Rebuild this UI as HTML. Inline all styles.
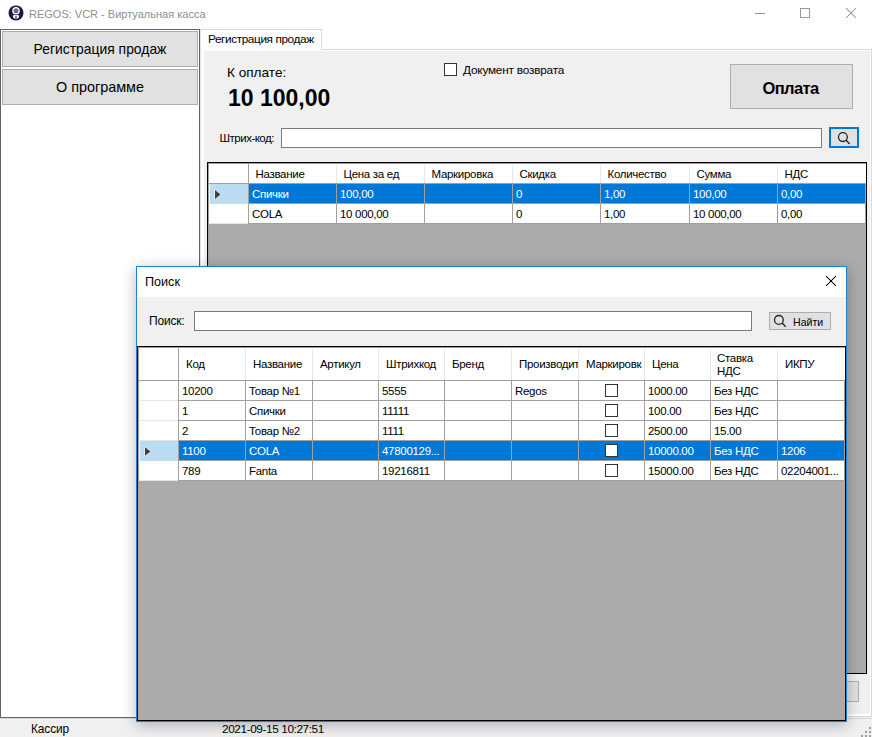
<!DOCTYPE html><html><head><meta charset="utf-8"><style>
html,body{margin:0;padding:0;}
body{width:872px;height:737px;overflow:hidden;position:relative;background:#fff;font-family:"Liberation Sans",sans-serif;}
.a{position:absolute;box-sizing:border-box;}
.t{position:absolute;white-space:nowrap;font-family:"Liberation Sans",sans-serif;}
svg{position:absolute;overflow:visible;}
</style></head><body>
<svg style="left:0;top:0" width="30" height="28" viewBox="0 0 30 28">
<circle cx="16" cy="12.9" r="7.5" fill="#1c1840"/>
<circle cx="16" cy="10.7" r="3.15" fill="#6c6890" stroke="#fff" stroke-width="1.3"/>
<path d="M13 16.2 Q13 15.1 14.2 15.1 L17.8 15.1 Q19 15.1 19 16.2 Q19 18.7 16 18.7 Q13 18.7 13 16.2 Z" fill="#fff"/>
<rect x="15.35" y="15.6" width="1.3" height="2.6" fill="#3a3660"/>
</svg>
<div class="t" style="left:29px;top:6.99px;font-size:11px;line-height:15px;color:#8e8e8e;font-weight:normal;">REGOS: VCR - Виртуальная касса</div>
<div class="a" style="left:755px;top:13px;width:10px;height:1px;background:#999;"></div>
<div class="a" style="left:800px;top:8px;width:10px;height:10px;box-shadow:inset 0 0 0 1px #999;"></div>
<div class="a" style="left:847px;top:8px;width:1px;height:1px;background:rgba(0,0,0,0.07);"></div>
<div class="a" style="left:846px;top:9px;width:1px;height:1px;background:rgba(0,0,0,0.07);"></div>
<div class="a" style="left:854px;top:8px;width:1px;height:1px;background:rgba(0,0,0,0.07);"></div>
<div class="a" style="left:855px;top:9px;width:1px;height:1px;background:rgba(0,0,0,0.07);"></div>
<div class="a" style="left:848px;top:9px;width:1px;height:1px;background:rgba(0,0,0,0.07);"></div>
<div class="a" style="left:847px;top:10px;width:1px;height:1px;background:rgba(0,0,0,0.07);"></div>
<div class="a" style="left:853px;top:9px;width:1px;height:1px;background:rgba(0,0,0,0.07);"></div>
<div class="a" style="left:854px;top:10px;width:1px;height:1px;background:rgba(0,0,0,0.07);"></div>
<div class="a" style="left:849px;top:10px;width:1px;height:1px;background:rgba(0,0,0,0.07);"></div>
<div class="a" style="left:848px;top:11px;width:1px;height:1px;background:rgba(0,0,0,0.07);"></div>
<div class="a" style="left:852px;top:10px;width:1px;height:1px;background:rgba(0,0,0,0.07);"></div>
<div class="a" style="left:853px;top:11px;width:1px;height:1px;background:rgba(0,0,0,0.07);"></div>
<div class="a" style="left:850px;top:11px;width:1px;height:1px;background:rgba(0,0,0,0.07);"></div>
<div class="a" style="left:849px;top:12px;width:1px;height:1px;background:rgba(0,0,0,0.07);"></div>
<div class="a" style="left:851px;top:11px;width:1px;height:1px;background:rgba(0,0,0,0.07);"></div>
<div class="a" style="left:852px;top:12px;width:1px;height:1px;background:rgba(0,0,0,0.07);"></div>
<div class="a" style="left:851px;top:12px;width:1px;height:1px;background:rgba(0,0,0,0.07);"></div>
<div class="a" style="left:850px;top:13px;width:1px;height:1px;background:rgba(0,0,0,0.07);"></div>
<div class="a" style="left:850px;top:12px;width:1px;height:1px;background:rgba(0,0,0,0.07);"></div>
<div class="a" style="left:851px;top:13px;width:1px;height:1px;background:rgba(0,0,0,0.07);"></div>
<div class="a" style="left:852px;top:13px;width:1px;height:1px;background:rgba(0,0,0,0.07);"></div>
<div class="a" style="left:851px;top:14px;width:1px;height:1px;background:rgba(0,0,0,0.07);"></div>
<div class="a" style="left:849px;top:13px;width:1px;height:1px;background:rgba(0,0,0,0.07);"></div>
<div class="a" style="left:850px;top:14px;width:1px;height:1px;background:rgba(0,0,0,0.07);"></div>
<div class="a" style="left:853px;top:14px;width:1px;height:1px;background:rgba(0,0,0,0.07);"></div>
<div class="a" style="left:852px;top:15px;width:1px;height:1px;background:rgba(0,0,0,0.07);"></div>
<div class="a" style="left:848px;top:14px;width:1px;height:1px;background:rgba(0,0,0,0.07);"></div>
<div class="a" style="left:849px;top:15px;width:1px;height:1px;background:rgba(0,0,0,0.07);"></div>
<div class="a" style="left:854px;top:15px;width:1px;height:1px;background:rgba(0,0,0,0.07);"></div>
<div class="a" style="left:853px;top:16px;width:1px;height:1px;background:rgba(0,0,0,0.07);"></div>
<div class="a" style="left:847px;top:15px;width:1px;height:1px;background:rgba(0,0,0,0.07);"></div>
<div class="a" style="left:848px;top:16px;width:1px;height:1px;background:rgba(0,0,0,0.07);"></div>
<div class="a" style="left:855px;top:16px;width:1px;height:1px;background:rgba(0,0,0,0.07);"></div>
<div class="a" style="left:854px;top:17px;width:1px;height:1px;background:rgba(0,0,0,0.07);"></div>
<div class="a" style="left:846px;top:16px;width:1px;height:1px;background:rgba(0,0,0,0.07);"></div>
<div class="a" style="left:847px;top:17px;width:1px;height:1px;background:rgba(0,0,0,0.07);"></div>
<div class="a" style="left:846px;top:8px;width:1px;height:1px;background:#999;"></div>
<div class="a" style="left:855px;top:8px;width:1px;height:1px;background:#999;"></div>
<div class="a" style="left:847px;top:9px;width:1px;height:1px;background:#999;"></div>
<div class="a" style="left:854px;top:9px;width:1px;height:1px;background:#999;"></div>
<div class="a" style="left:848px;top:10px;width:1px;height:1px;background:#999;"></div>
<div class="a" style="left:853px;top:10px;width:1px;height:1px;background:#999;"></div>
<div class="a" style="left:849px;top:11px;width:1px;height:1px;background:#999;"></div>
<div class="a" style="left:852px;top:11px;width:1px;height:1px;background:#999;"></div>
<div class="a" style="left:850px;top:12px;width:1px;height:1px;background:#999;"></div>
<div class="a" style="left:851px;top:12px;width:1px;height:1px;background:#999;"></div>
<div class="a" style="left:851px;top:13px;width:1px;height:1px;background:#999;"></div>
<div class="a" style="left:850px;top:13px;width:1px;height:1px;background:#999;"></div>
<div class="a" style="left:852px;top:14px;width:1px;height:1px;background:#999;"></div>
<div class="a" style="left:849px;top:14px;width:1px;height:1px;background:#999;"></div>
<div class="a" style="left:853px;top:15px;width:1px;height:1px;background:#999;"></div>
<div class="a" style="left:848px;top:15px;width:1px;height:1px;background:#999;"></div>
<div class="a" style="left:854px;top:16px;width:1px;height:1px;background:#999;"></div>
<div class="a" style="left:847px;top:16px;width:1px;height:1px;background:#999;"></div>
<div class="a" style="left:855px;top:17px;width:1px;height:1px;background:#999;"></div>
<div class="a" style="left:846px;top:17px;width:1px;height:1px;background:#999;"></div>
<div class="a" style="left:0px;top:29px;width:200px;height:689px;background:#fff;box-shadow:inset 0 0 0 1px #646464;"></div>
<div class="a" style="left:2px;top:31px;width:196px;height:36px;background:#e1e1e1;box-shadow:inset 0 0 0 1px #adadad;"></div>
<div class="a" style="left:2px;top:69px;width:196px;height:36px;background:#e1e1e1;box-shadow:inset 0 0 0 1px #adadad;"></div>
<div class="t" style="left:2px;width:196px;text-align:center;top:40px;font-size:13.9px;line-height:18px;">Регистрация продаж</div>
<div class="t" style="left:2px;width:196px;text-align:center;top:78px;font-size:14.4px;line-height:18px;">О программе</div>
<div class="a" style="left:200px;top:49px;width:672px;height:668px;background:#fff;"></div>
<div class="a" style="left:321px;top:49px;width:551px;height:1px;background:#d9d9d9;"></div>
<div class="a" style="left:871px;top:49px;width:1px;height:668px;background:#d9d9d9;"></div>
<div class="a" style="left:200px;top:716px;width:672px;height:1px;background:#d9d9d9;"></div>
<div class="a" style="left:204px;top:51px;width:666px;height:663px;background:#f0f0f0;"></div>
<div class="a" style="left:200px;top:29px;width:1px;height:688px;background:#e3e3e3;"></div>
<div class="a" style="left:201px;top:29px;width:121px;height:22px;background:#fff;"></div>
<div class="a" style="left:201px;top:29px;width:121px;height:1px;background:#d9d9d9;"></div>
<div class="a" style="left:321px;top:29px;width:1px;height:21px;background:#d9d9d9;"></div>
<div class="t" style="left:208px;top:30.61px;font-size:11.8px;line-height:17px;color:#000;font-weight:normal;letter-spacing:-0.4px;">Регистрация продаж</div>
<div class="t" style="left:227px;top:63.19px;font-size:13.6px;line-height:19px;color:#000;font-weight:normal;">К оплате:</div>
<div class="t" style="left:228px;top:81.53px;font-size:23px;line-height:32px;color:#000;font-weight:bold;">10 100,00</div>
<div class="a" style="left:444px;top:63px;width:13px;height:13px;background:#fff;box-shadow:inset 0 0 0 1px #333;"></div>
<div class="t" style="left:463px;top:61.91px;font-size:11.8px;line-height:17px;color:#000;font-weight:normal;letter-spacing:-0.2px;">Документ возврата</div>
<div class="a" style="left:730px;top:64px;width:123px;height:45px;background:#e1e1e1;box-shadow:inset 0 0 0 1px #adadad;"></div>
<div class="t" style="left:729px;width:123px;text-align:center;top:78px;font-size:16.5px;line-height:20px;font-weight:bold;letter-spacing:-0.6px;">Оплата</div>
<div class="t" style="left:219.5px;top:130.02px;font-size:11.5px;line-height:16px;color:#000;font-weight:normal;letter-spacing:-0.5px;">Штрих-код:</div>
<div class="a" style="left:281px;top:128px;width:541px;height:20px;background:#fff;box-shadow:inset 0 0 0 1px #7a7a7a;"></div>
<div class="a" style="left:829px;top:127px;width:30px;height:21px;background:#e1e1e1;box-shadow:inset 0 0 0 2px #0078d7;"></div>
<svg style="left:0;top:0" width="872" height="160"><circle cx="842.9" cy="137.1" r="4.4" fill="none" stroke="#222" stroke-width="1.3"/><path d="M846.1 140.3 L849.7 143.9" stroke="#222" stroke-width="1.4"/></svg>
<div class="a" style="left:207px;top:162px;width:660px;height:512px;background:#ababab;box-shadow:inset 0 0 0 1px #000;"></div>
<div class="a" style="left:208px;top:163px;width:658px;height:20px;background:#fff;"></div>
<div class="a" style="left:208px;top:183px;width:658px;height:1px;background:#a0a0a0;"></div>
<div class="a" style="left:336px;top:165px;width:1px;height:18px;background:#e5e5e5;"></div>
<div class="a" style="left:424px;top:165px;width:1px;height:18px;background:#e5e5e5;"></div>
<div class="a" style="left:512px;top:165px;width:1px;height:18px;background:#e5e5e5;"></div>
<div class="a" style="left:600px;top:165px;width:1px;height:18px;background:#e5e5e5;"></div>
<div class="a" style="left:689px;top:165px;width:1px;height:18px;background:#e5e5e5;"></div>
<div class="a" style="left:777px;top:165px;width:1px;height:18px;background:#e5e5e5;"></div>
<div class="a" style="left:248px;top:163px;width:1px;height:21px;background:#a0a0a0;"></div>
<div class="a" style="left:208px;top:184px;width:40px;height:20px;background:#fff;"></div>
<div class="a" style="left:210px;top:184px;width:38px;height:20px;background:#bcdcf4;"></div>
<div class="a" style="left:249px;top:184px;width:617px;height:19px;background:#0078d7;"></div>
<div class="a" style="left:249px;top:203px;width:617px;height:1px;background:#a0a0a0;"></div>
<div class="a" style="left:248px;top:184px;width:1px;height:20px;background:#a0a0a0;"></div>
<div class="a" style="left:336px;top:184px;width:1px;height:20px;background:#a0a0a0;"></div>
<div class="a" style="left:424px;top:184px;width:1px;height:20px;background:#a0a0a0;"></div>
<div class="a" style="left:512px;top:184px;width:1px;height:20px;background:#a0a0a0;"></div>
<div class="a" style="left:600px;top:184px;width:1px;height:20px;background:#a0a0a0;"></div>
<div class="a" style="left:689px;top:184px;width:1px;height:20px;background:#a0a0a0;"></div>
<div class="a" style="left:777px;top:184px;width:1px;height:20px;background:#a0a0a0;"></div>
<div class="t" style="left:252px;top:185.77px;font-size:11.5px;line-height:16px;color:#fff;font-weight:normal;letter-spacing:-0.3px;">Спички</div>
<div class="t" style="left:340px;top:185.77px;font-size:11.5px;line-height:16px;color:#fff;font-weight:normal;letter-spacing:-0.3px;">100,00</div>
<div class="t" style="left:516px;top:185.77px;font-size:11.5px;line-height:16px;color:#fff;font-weight:normal;letter-spacing:-0.3px;">0</div>
<div class="t" style="left:604px;top:185.77px;font-size:11.5px;line-height:16px;color:#fff;font-weight:normal;letter-spacing:-0.3px;">1,00</div>
<div class="t" style="left:693px;top:185.77px;font-size:11.5px;line-height:16px;color:#fff;font-weight:normal;letter-spacing:-0.3px;">100,00</div>
<div class="t" style="left:781px;top:185.77px;font-size:11.5px;line-height:16px;color:#fff;font-weight:normal;letter-spacing:-0.3px;">0,00</div>
<svg style="left:0;top:0" width="300" height="260"><path d="M214.4 189.2 L221.4 194.5 L214.4 199.8 Z" fill="#fff"/><path d="M215 190 L220.6 194.5 L215 199 Z" fill="#404040"/></svg>
<div class="a" style="left:208px;top:204px;width:40px;height:20px;background:#fff;"></div>
<div class="a" style="left:210px;top:223px;width:38px;height:1px;background:#e6e6e6;"></div>
<div class="a" style="left:249px;top:204px;width:617px;height:19px;background:#fff;"></div>
<div class="a" style="left:249px;top:223px;width:617px;height:1px;background:#a0a0a0;"></div>
<div class="a" style="left:248px;top:204px;width:1px;height:20px;background:#a0a0a0;"></div>
<div class="a" style="left:336px;top:204px;width:1px;height:20px;background:#a0a0a0;"></div>
<div class="a" style="left:424px;top:204px;width:1px;height:20px;background:#a0a0a0;"></div>
<div class="a" style="left:512px;top:204px;width:1px;height:20px;background:#a0a0a0;"></div>
<div class="a" style="left:600px;top:204px;width:1px;height:20px;background:#a0a0a0;"></div>
<div class="a" style="left:689px;top:204px;width:1px;height:20px;background:#a0a0a0;"></div>
<div class="a" style="left:777px;top:204px;width:1px;height:20px;background:#a0a0a0;"></div>
<div class="t" style="left:252px;top:205.77px;font-size:11.5px;line-height:16px;color:#000;font-weight:normal;letter-spacing:-0.3px;">COLA</div>
<div class="t" style="left:340px;top:205.77px;font-size:11.5px;line-height:16px;color:#000;font-weight:normal;letter-spacing:-0.3px;">10 000,00</div>
<div class="t" style="left:516px;top:205.77px;font-size:11.5px;line-height:16px;color:#000;font-weight:normal;letter-spacing:-0.3px;">0</div>
<div class="t" style="left:604px;top:205.77px;font-size:11.5px;line-height:16px;color:#000;font-weight:normal;letter-spacing:-0.3px;">1,00</div>
<div class="t" style="left:693px;top:205.77px;font-size:11.5px;line-height:16px;color:#000;font-weight:normal;letter-spacing:-0.3px;">10 000,00</div>
<div class="t" style="left:781px;top:205.77px;font-size:11.5px;line-height:16px;color:#000;font-weight:normal;letter-spacing:-0.3px;">0,00</div>
<div class="t" style="left:255.5px;top:166.32px;font-size:11.5px;line-height:16px;color:#000;font-weight:normal;letter-spacing:-0.3px;">Название</div>
<div class="t" style="left:343.5px;top:166.32px;font-size:11.5px;line-height:16px;color:#000;font-weight:normal;letter-spacing:-0.3px;">Цена за ед</div>
<div class="t" style="left:431.5px;top:166.32px;font-size:11.5px;line-height:16px;color:#000;font-weight:normal;letter-spacing:-0.3px;">Маркировка</div>
<div class="t" style="left:519.5px;top:166.32px;font-size:11.5px;line-height:16px;color:#000;font-weight:normal;letter-spacing:-0.3px;">Скидка</div>
<div class="t" style="left:607.5px;top:166.32px;font-size:11.5px;line-height:16px;color:#000;font-weight:normal;letter-spacing:-0.3px;">Количество</div>
<div class="t" style="left:696.5px;top:166.32px;font-size:11.5px;line-height:16px;color:#000;font-weight:normal;letter-spacing:-0.3px;">Сумма</div>
<div class="t" style="left:784.5px;top:166.32px;font-size:11.5px;line-height:16px;color:#000;font-weight:normal;letter-spacing:-0.3px;">НДС</div>
<div class="a" style="left:865px;top:184px;width:1px;height:40px;background:#a0a0a0;"></div>
<div class="a" style="left:208px;top:163px;width:658px;height:1px;background:#a0a0a0;"></div>
<div class="a" style="left:208px;top:163px;width:1px;height:510px;background:#a0a0a0;"></div>
<div class="a" style="left:209px;top:184px;width:1px;height:40px;background:#f4f4f4;"></div>
<div class="a" style="left:700px;top:681px;width:159px;height:21px;background:#e1e1e1;box-shadow:inset 0 0 0 1px #adadad;"></div>
<div class="a" style="left:200px;top:717px;width:672px;height:20px;background:#f0f0f0;"></div>
<div class="a" style="left:0px;top:718px;width:200px;height:19px;background:#f0f0f0;"></div>
<div class="a" style="left:0px;top:718px;width:872px;height:1px;background:#d7d7d7;"></div>
<div class="t" style="left:31px;top:720.78px;font-size:11.9px;line-height:17px;color:#000;font-weight:normal;letter-spacing:-0.1px;">Кассир</div>
<div class="t" style="left:222px;top:720.61px;font-size:11.8px;line-height:17px;color:#000;font-weight:normal;letter-spacing:-0.4px;">2021-09-15 10:27:51</div>
<div class="a" style="left:869px;top:727px;width:2px;height:2px;background:#a0a0a0;"></div>
<div class="a" style="left:865px;top:731px;width:2px;height:2px;background:#a0a0a0;"></div>
<div class="a" style="left:869px;top:731px;width:2px;height:2px;background:#a0a0a0;"></div>
<div class="a" style="left:861px;top:735px;width:2px;height:2px;background:#a0a0a0;"></div>
<div class="a" style="left:865px;top:735px;width:2px;height:2px;background:#a0a0a0;"></div>
<div class="a" style="left:869px;top:735px;width:2px;height:2px;background:#a0a0a0;"></div>
<div class="a" style="left:136px;top:266px;width:711px;height:456px;background:#f0f0f0;box-shadow:0 0 0 1px rgba(0,0,0,0) , 0 3px 14px rgba(0,0,0,0.28);"></div>
<div class="a" style="left:136px;top:266px;width:711px;height:456px;box-shadow:inset 0 0 0 1px #1883d7;"></div>
<div class="a" style="left:137px;top:267px;width:709px;height:30px;background:#fff;"></div>
<div class="t" style="left:145px;top:273.43px;font-size:12.6px;line-height:18px;color:#000;font-weight:normal;">Поиск</div>
<div class="a" style="left:827px;top:276px;width:1px;height:1px;background:rgba(0,0,0,0.18);"></div>
<div class="a" style="left:826px;top:277px;width:1px;height:1px;background:rgba(0,0,0,0.18);"></div>
<div class="a" style="left:834px;top:276px;width:1px;height:1px;background:rgba(0,0,0,0.18);"></div>
<div class="a" style="left:835px;top:277px;width:1px;height:1px;background:rgba(0,0,0,0.18);"></div>
<div class="a" style="left:828px;top:277px;width:1px;height:1px;background:rgba(0,0,0,0.18);"></div>
<div class="a" style="left:827px;top:278px;width:1px;height:1px;background:rgba(0,0,0,0.18);"></div>
<div class="a" style="left:833px;top:277px;width:1px;height:1px;background:rgba(0,0,0,0.18);"></div>
<div class="a" style="left:834px;top:278px;width:1px;height:1px;background:rgba(0,0,0,0.18);"></div>
<div class="a" style="left:829px;top:278px;width:1px;height:1px;background:rgba(0,0,0,0.18);"></div>
<div class="a" style="left:828px;top:279px;width:1px;height:1px;background:rgba(0,0,0,0.18);"></div>
<div class="a" style="left:832px;top:278px;width:1px;height:1px;background:rgba(0,0,0,0.18);"></div>
<div class="a" style="left:833px;top:279px;width:1px;height:1px;background:rgba(0,0,0,0.18);"></div>
<div class="a" style="left:830px;top:279px;width:1px;height:1px;background:rgba(0,0,0,0.18);"></div>
<div class="a" style="left:829px;top:280px;width:1px;height:1px;background:rgba(0,0,0,0.18);"></div>
<div class="a" style="left:831px;top:279px;width:1px;height:1px;background:rgba(0,0,0,0.18);"></div>
<div class="a" style="left:832px;top:280px;width:1px;height:1px;background:rgba(0,0,0,0.18);"></div>
<div class="a" style="left:831px;top:280px;width:1px;height:1px;background:rgba(0,0,0,0.18);"></div>
<div class="a" style="left:830px;top:281px;width:1px;height:1px;background:rgba(0,0,0,0.18);"></div>
<div class="a" style="left:830px;top:280px;width:1px;height:1px;background:rgba(0,0,0,0.18);"></div>
<div class="a" style="left:831px;top:281px;width:1px;height:1px;background:rgba(0,0,0,0.18);"></div>
<div class="a" style="left:832px;top:281px;width:1px;height:1px;background:rgba(0,0,0,0.18);"></div>
<div class="a" style="left:831px;top:282px;width:1px;height:1px;background:rgba(0,0,0,0.18);"></div>
<div class="a" style="left:829px;top:281px;width:1px;height:1px;background:rgba(0,0,0,0.18);"></div>
<div class="a" style="left:830px;top:282px;width:1px;height:1px;background:rgba(0,0,0,0.18);"></div>
<div class="a" style="left:833px;top:282px;width:1px;height:1px;background:rgba(0,0,0,0.18);"></div>
<div class="a" style="left:832px;top:283px;width:1px;height:1px;background:rgba(0,0,0,0.18);"></div>
<div class="a" style="left:828px;top:282px;width:1px;height:1px;background:rgba(0,0,0,0.18);"></div>
<div class="a" style="left:829px;top:283px;width:1px;height:1px;background:rgba(0,0,0,0.18);"></div>
<div class="a" style="left:834px;top:283px;width:1px;height:1px;background:rgba(0,0,0,0.18);"></div>
<div class="a" style="left:833px;top:284px;width:1px;height:1px;background:rgba(0,0,0,0.18);"></div>
<div class="a" style="left:827px;top:283px;width:1px;height:1px;background:rgba(0,0,0,0.18);"></div>
<div class="a" style="left:828px;top:284px;width:1px;height:1px;background:rgba(0,0,0,0.18);"></div>
<div class="a" style="left:835px;top:284px;width:1px;height:1px;background:rgba(0,0,0,0.18);"></div>
<div class="a" style="left:834px;top:285px;width:1px;height:1px;background:rgba(0,0,0,0.18);"></div>
<div class="a" style="left:826px;top:284px;width:1px;height:1px;background:rgba(0,0,0,0.18);"></div>
<div class="a" style="left:827px;top:285px;width:1px;height:1px;background:rgba(0,0,0,0.18);"></div>
<div class="a" style="left:826px;top:276px;width:1px;height:1px;background:#000;"></div>
<div class="a" style="left:835px;top:276px;width:1px;height:1px;background:#000;"></div>
<div class="a" style="left:827px;top:277px;width:1px;height:1px;background:#000;"></div>
<div class="a" style="left:834px;top:277px;width:1px;height:1px;background:#000;"></div>
<div class="a" style="left:828px;top:278px;width:1px;height:1px;background:#000;"></div>
<div class="a" style="left:833px;top:278px;width:1px;height:1px;background:#000;"></div>
<div class="a" style="left:829px;top:279px;width:1px;height:1px;background:#000;"></div>
<div class="a" style="left:832px;top:279px;width:1px;height:1px;background:#000;"></div>
<div class="a" style="left:830px;top:280px;width:1px;height:1px;background:#000;"></div>
<div class="a" style="left:831px;top:280px;width:1px;height:1px;background:#000;"></div>
<div class="a" style="left:831px;top:281px;width:1px;height:1px;background:#000;"></div>
<div class="a" style="left:830px;top:281px;width:1px;height:1px;background:#000;"></div>
<div class="a" style="left:832px;top:282px;width:1px;height:1px;background:#000;"></div>
<div class="a" style="left:829px;top:282px;width:1px;height:1px;background:#000;"></div>
<div class="a" style="left:833px;top:283px;width:1px;height:1px;background:#000;"></div>
<div class="a" style="left:828px;top:283px;width:1px;height:1px;background:#000;"></div>
<div class="a" style="left:834px;top:284px;width:1px;height:1px;background:#000;"></div>
<div class="a" style="left:827px;top:284px;width:1px;height:1px;background:#000;"></div>
<div class="a" style="left:835px;top:285px;width:1px;height:1px;background:#000;"></div>
<div class="a" style="left:826px;top:285px;width:1px;height:1px;background:#000;"></div>
<div class="t" style="left:149px;top:312.64px;font-size:12px;line-height:17px;color:#000;font-weight:normal;letter-spacing:-0.2px;">Поиск:</div>
<div class="a" style="left:194px;top:311px;width:558px;height:20px;background:#fff;box-shadow:inset 0 0 0 1px #7a7a7a;"></div>
<div class="a" style="left:769px;top:312px;width:62px;height:18px;background:#e1e1e1;box-shadow:inset 0 0 0 1px #adadad;"></div>
<svg style="left:0;top:0" width="872" height="340"><circle cx="778.9" cy="319.9" r="4.4" fill="none" stroke="#222" stroke-width="1.3"/><path d="M782.1 323.1 L785.7 326.7" stroke="#222" stroke-width="1.4"/></svg>
<div class="t" style="left:793px;top:314.73px;font-size:10.6px;line-height:15px;color:#000;font-weight:normal;">Найти</div>
<div class="a" style="left:137px;top:346px;width:709px;height:375px;background:#ababab;box-shadow:inset 0 0 0 1px #000;"></div>
<div class="a" style="left:138px;top:347px;width:707px;height:33px;background:#fff;"></div>
<div class="a" style="left:138px;top:380px;width:707px;height:1px;background:#a0a0a0;"></div>
<div class="a" style="left:245px;top:349px;width:1px;height:31px;background:#e5e5e5;"></div>
<div class="a" style="left:312px;top:349px;width:1px;height:31px;background:#e5e5e5;"></div>
<div class="a" style="left:378px;top:349px;width:1px;height:31px;background:#e5e5e5;"></div>
<div class="a" style="left:444px;top:349px;width:1px;height:31px;background:#e5e5e5;"></div>
<div class="a" style="left:511px;top:349px;width:1px;height:31px;background:#e5e5e5;"></div>
<div class="a" style="left:578px;top:349px;width:1px;height:31px;background:#e5e5e5;"></div>
<div class="a" style="left:644px;top:349px;width:1px;height:31px;background:#e5e5e5;"></div>
<div class="a" style="left:710px;top:349px;width:1px;height:31px;background:#e5e5e5;"></div>
<div class="a" style="left:777px;top:349px;width:1px;height:31px;background:#e5e5e5;"></div>
<div class="a" style="left:178px;top:347px;width:1px;height:34px;background:#a0a0a0;"></div>
<div class="t" style="left:186px;top:357.49px;width:59px;overflow:hidden;font-size:11.5px;line-height:15px;letter-spacing:-0.3px;">Код</div>
<div class="t" style="left:253px;top:357.49px;width:59px;overflow:hidden;font-size:11.5px;line-height:15px;letter-spacing:-0.3px;">Название</div>
<div class="t" style="left:320px;top:357.49px;width:58px;overflow:hidden;font-size:11.5px;line-height:15px;letter-spacing:-0.3px;">Артикул</div>
<div class="t" style="left:386px;top:357.49px;width:58px;overflow:hidden;font-size:11.5px;line-height:15px;letter-spacing:-0.3px;">Штрихкод</div>
<div class="t" style="left:452px;top:357.49px;width:59px;overflow:hidden;font-size:11.5px;line-height:15px;letter-spacing:-0.3px;">Бренд</div>
<div class="t" style="left:519px;top:357.49px;width:59px;overflow:hidden;font-size:11.5px;line-height:15px;letter-spacing:-0.3px;">Производитель</div>
<div class="t" style="left:586px;top:357.49px;width:56px;overflow:hidden;font-size:11.5px;line-height:15px;letter-spacing:-0.3px;">Маркировка</div>
<div class="t" style="left:652px;top:357.49px;width:58px;overflow:hidden;font-size:11.5px;line-height:15px;letter-spacing:-0.3px;">Цена</div>
<div class="t" style="left:717px;top:352px;width:58px;overflow:hidden;font-size:11.5px;line-height:13px;letter-spacing:-0.3px;">Ставка<br>НДС</div>
<div class="t" style="left:785px;top:357.49px;width:60px;overflow:hidden;font-size:11.5px;line-height:15px;letter-spacing:-0.3px;">ИКПУ</div>
<div class="a" style="left:138px;top:381px;width:40px;height:20px;background:#fff;"></div>
<div class="a" style="left:140px;top:400px;width:38px;height:1px;background:#e6e6e6;"></div>
<div class="a" style="left:179px;top:381px;width:666px;height:19px;background:#fff;"></div>
<div class="a" style="left:179px;top:400px;width:666px;height:1px;background:#a0a0a0;"></div>
<div class="a" style="left:178px;top:381px;width:1px;height:20px;background:#a0a0a0;"></div>
<div class="a" style="left:245px;top:381px;width:1px;height:20px;background:#a0a0a0;"></div>
<div class="a" style="left:312px;top:381px;width:1px;height:20px;background:#a0a0a0;"></div>
<div class="a" style="left:378px;top:381px;width:1px;height:20px;background:#a0a0a0;"></div>
<div class="a" style="left:444px;top:381px;width:1px;height:20px;background:#a0a0a0;"></div>
<div class="a" style="left:511px;top:381px;width:1px;height:20px;background:#a0a0a0;"></div>
<div class="a" style="left:578px;top:381px;width:1px;height:20px;background:#a0a0a0;"></div>
<div class="a" style="left:644px;top:381px;width:1px;height:20px;background:#a0a0a0;"></div>
<div class="a" style="left:710px;top:381px;width:1px;height:20px;background:#a0a0a0;"></div>
<div class="a" style="left:777px;top:381px;width:1px;height:20px;background:#a0a0a0;"></div>
<div class="t" style="left:182px;top:382.52px;font-size:11.5px;line-height:16px;color:#000;font-weight:normal;letter-spacing:-0.3px;">10200</div>
<div class="t" style="left:249px;top:382.52px;font-size:11.5px;line-height:16px;color:#000;font-weight:normal;letter-spacing:-0.3px;">Товар №1</div>
<div class="t" style="left:382px;top:382.52px;font-size:11.5px;line-height:16px;color:#000;font-weight:normal;letter-spacing:-0.3px;">5555</div>
<div class="t" style="left:515px;top:382.52px;font-size:11.5px;line-height:16px;color:#000;font-weight:normal;letter-spacing:-0.3px;">Regos</div>
<div class="a" style="left:605px;top:384px;width:13px;height:13px;background:#fff;box-shadow:inset 0 0 0 1px #333;"></div>
<div class="t" style="left:648px;top:382.52px;font-size:11.5px;line-height:16px;color:#000;font-weight:normal;letter-spacing:-0.3px;">1000.00</div>
<div class="t" style="left:714px;top:382.52px;font-size:11.5px;line-height:16px;color:#000;font-weight:normal;letter-spacing:-0.3px;">Без НДС</div>
<div class="a" style="left:138px;top:401px;width:40px;height:20px;background:#fff;"></div>
<div class="a" style="left:140px;top:420px;width:38px;height:1px;background:#e6e6e6;"></div>
<div class="a" style="left:179px;top:401px;width:666px;height:19px;background:#fff;"></div>
<div class="a" style="left:179px;top:420px;width:666px;height:1px;background:#a0a0a0;"></div>
<div class="a" style="left:178px;top:401px;width:1px;height:20px;background:#a0a0a0;"></div>
<div class="a" style="left:245px;top:401px;width:1px;height:20px;background:#a0a0a0;"></div>
<div class="a" style="left:312px;top:401px;width:1px;height:20px;background:#a0a0a0;"></div>
<div class="a" style="left:378px;top:401px;width:1px;height:20px;background:#a0a0a0;"></div>
<div class="a" style="left:444px;top:401px;width:1px;height:20px;background:#a0a0a0;"></div>
<div class="a" style="left:511px;top:401px;width:1px;height:20px;background:#a0a0a0;"></div>
<div class="a" style="left:578px;top:401px;width:1px;height:20px;background:#a0a0a0;"></div>
<div class="a" style="left:644px;top:401px;width:1px;height:20px;background:#a0a0a0;"></div>
<div class="a" style="left:710px;top:401px;width:1px;height:20px;background:#a0a0a0;"></div>
<div class="a" style="left:777px;top:401px;width:1px;height:20px;background:#a0a0a0;"></div>
<div class="t" style="left:182px;top:402.52px;font-size:11.5px;line-height:16px;color:#000;font-weight:normal;letter-spacing:-0.3px;">1</div>
<div class="t" style="left:249px;top:402.52px;font-size:11.5px;line-height:16px;color:#000;font-weight:normal;letter-spacing:-0.3px;">Спички</div>
<div class="t" style="left:382px;top:402.52px;font-size:11.5px;line-height:16px;color:#000;font-weight:normal;letter-spacing:-0.3px;">11111</div>
<div class="a" style="left:605px;top:404px;width:13px;height:13px;background:#fff;box-shadow:inset 0 0 0 1px #333;"></div>
<div class="t" style="left:648px;top:402.52px;font-size:11.5px;line-height:16px;color:#000;font-weight:normal;letter-spacing:-0.3px;">100.00</div>
<div class="t" style="left:714px;top:402.52px;font-size:11.5px;line-height:16px;color:#000;font-weight:normal;letter-spacing:-0.3px;">Без НДС</div>
<div class="a" style="left:138px;top:421px;width:40px;height:20px;background:#fff;"></div>
<div class="a" style="left:140px;top:440px;width:38px;height:1px;background:#e6e6e6;"></div>
<div class="a" style="left:179px;top:421px;width:666px;height:19px;background:#fff;"></div>
<div class="a" style="left:179px;top:440px;width:666px;height:1px;background:#a0a0a0;"></div>
<div class="a" style="left:178px;top:421px;width:1px;height:20px;background:#a0a0a0;"></div>
<div class="a" style="left:245px;top:421px;width:1px;height:20px;background:#a0a0a0;"></div>
<div class="a" style="left:312px;top:421px;width:1px;height:20px;background:#a0a0a0;"></div>
<div class="a" style="left:378px;top:421px;width:1px;height:20px;background:#a0a0a0;"></div>
<div class="a" style="left:444px;top:421px;width:1px;height:20px;background:#a0a0a0;"></div>
<div class="a" style="left:511px;top:421px;width:1px;height:20px;background:#a0a0a0;"></div>
<div class="a" style="left:578px;top:421px;width:1px;height:20px;background:#a0a0a0;"></div>
<div class="a" style="left:644px;top:421px;width:1px;height:20px;background:#a0a0a0;"></div>
<div class="a" style="left:710px;top:421px;width:1px;height:20px;background:#a0a0a0;"></div>
<div class="a" style="left:777px;top:421px;width:1px;height:20px;background:#a0a0a0;"></div>
<div class="t" style="left:182px;top:422.52px;font-size:11.5px;line-height:16px;color:#000;font-weight:normal;letter-spacing:-0.3px;">2</div>
<div class="t" style="left:249px;top:422.52px;font-size:11.5px;line-height:16px;color:#000;font-weight:normal;letter-spacing:-0.3px;">Товар №2</div>
<div class="t" style="left:382px;top:422.52px;font-size:11.5px;line-height:16px;color:#000;font-weight:normal;letter-spacing:-0.3px;">1111</div>
<div class="a" style="left:605px;top:424px;width:13px;height:13px;background:#fff;box-shadow:inset 0 0 0 1px #333;"></div>
<div class="t" style="left:648px;top:422.52px;font-size:11.5px;line-height:16px;color:#000;font-weight:normal;letter-spacing:-0.3px;">2500.00</div>
<div class="t" style="left:714px;top:422.52px;font-size:11.5px;line-height:16px;color:#000;font-weight:normal;letter-spacing:-0.3px;">15.00</div>
<div class="a" style="left:138px;top:441px;width:40px;height:20px;background:#fff;"></div>
<div class="a" style="left:140px;top:441px;width:38px;height:20px;background:#bcdcf4;"></div>
<div class="a" style="left:179px;top:441px;width:666px;height:19px;background:#0078d7;"></div>
<div class="a" style="left:179px;top:460px;width:666px;height:1px;background:#a0a0a0;"></div>
<div class="a" style="left:178px;top:441px;width:1px;height:20px;background:#a0a0a0;"></div>
<div class="a" style="left:245px;top:441px;width:1px;height:20px;background:#a0a0a0;"></div>
<div class="a" style="left:312px;top:441px;width:1px;height:20px;background:#a0a0a0;"></div>
<div class="a" style="left:378px;top:441px;width:1px;height:20px;background:#a0a0a0;"></div>
<div class="a" style="left:444px;top:441px;width:1px;height:20px;background:#a0a0a0;"></div>
<div class="a" style="left:511px;top:441px;width:1px;height:20px;background:#a0a0a0;"></div>
<div class="a" style="left:578px;top:441px;width:1px;height:20px;background:#a0a0a0;"></div>
<div class="a" style="left:644px;top:441px;width:1px;height:20px;background:#a0a0a0;"></div>
<div class="a" style="left:710px;top:441px;width:1px;height:20px;background:#a0a0a0;"></div>
<div class="a" style="left:777px;top:441px;width:1px;height:20px;background:#a0a0a0;"></div>
<div class="t" style="left:182px;top:442.52px;font-size:11.5px;line-height:16px;color:#fff;font-weight:normal;letter-spacing:-0.3px;">1100</div>
<div class="t" style="left:249px;top:442.52px;font-size:11.5px;line-height:16px;color:#fff;font-weight:normal;letter-spacing:-0.3px;">COLA</div>
<div class="t" style="left:382px;top:442.52px;font-size:11.5px;line-height:16px;color:#fff;font-weight:normal;letter-spacing:-0.3px;">47800129...</div>
<div class="a" style="left:605px;top:444px;width:13px;height:13px;background:#fff;box-shadow:inset 0 0 0 1px #333;"></div>
<div class="t" style="left:648px;top:442.52px;font-size:11.5px;line-height:16px;color:#fff;font-weight:normal;letter-spacing:-0.3px;">10000.00</div>
<div class="t" style="left:714px;top:442.52px;font-size:11.5px;line-height:16px;color:#fff;font-weight:normal;letter-spacing:-0.3px;">Без НДС</div>
<div class="t" style="left:781px;top:442.52px;font-size:11.5px;line-height:16px;color:#fff;font-weight:normal;letter-spacing:-0.3px;">1206</div>
<svg style="left:0;top:0" width="300" height="500"><path d="M144.4 446.4 L151.2 451.5 L144.4 456.6 Z" fill="#fff"/><path d="M145 447.2 L150.5 451.4 L145 455.8 Z" fill="#404040"/></svg>
<div class="a" style="left:138px;top:461px;width:40px;height:20px;background:#fff;"></div>
<div class="a" style="left:140px;top:480px;width:38px;height:1px;background:#e6e6e6;"></div>
<div class="a" style="left:179px;top:461px;width:666px;height:19px;background:#fff;"></div>
<div class="a" style="left:179px;top:480px;width:666px;height:1px;background:#a0a0a0;"></div>
<div class="a" style="left:178px;top:461px;width:1px;height:20px;background:#a0a0a0;"></div>
<div class="a" style="left:245px;top:461px;width:1px;height:20px;background:#a0a0a0;"></div>
<div class="a" style="left:312px;top:461px;width:1px;height:20px;background:#a0a0a0;"></div>
<div class="a" style="left:378px;top:461px;width:1px;height:20px;background:#a0a0a0;"></div>
<div class="a" style="left:444px;top:461px;width:1px;height:20px;background:#a0a0a0;"></div>
<div class="a" style="left:511px;top:461px;width:1px;height:20px;background:#a0a0a0;"></div>
<div class="a" style="left:578px;top:461px;width:1px;height:20px;background:#a0a0a0;"></div>
<div class="a" style="left:644px;top:461px;width:1px;height:20px;background:#a0a0a0;"></div>
<div class="a" style="left:710px;top:461px;width:1px;height:20px;background:#a0a0a0;"></div>
<div class="a" style="left:777px;top:461px;width:1px;height:20px;background:#a0a0a0;"></div>
<div class="t" style="left:182px;top:462.52px;font-size:11.5px;line-height:16px;color:#000;font-weight:normal;letter-spacing:-0.3px;">789</div>
<div class="t" style="left:249px;top:462.52px;font-size:11.5px;line-height:16px;color:#000;font-weight:normal;letter-spacing:-0.3px;">Fanta</div>
<div class="t" style="left:382px;top:462.52px;font-size:11.5px;line-height:16px;color:#000;font-weight:normal;letter-spacing:-0.3px;">19216811</div>
<div class="a" style="left:605px;top:464px;width:13px;height:13px;background:#fff;box-shadow:inset 0 0 0 1px #333;"></div>
<div class="t" style="left:648px;top:462.52px;font-size:11.5px;line-height:16px;color:#000;font-weight:normal;letter-spacing:-0.3px;">15000.00</div>
<div class="t" style="left:714px;top:462.52px;font-size:11.5px;line-height:16px;color:#000;font-weight:normal;letter-spacing:-0.3px;">Без НДС</div>
<div class="t" style="left:781px;top:462.52px;font-size:11.5px;line-height:16px;color:#000;font-weight:normal;letter-spacing:-0.3px;">02204001...</div>
<div class="a" style="left:844px;top:381px;width:1px;height:100px;background:#a0a0a0;"></div>
<div class="a" style="left:138px;top:347px;width:707px;height:1px;background:#a0a0a0;"></div>
<div class="a" style="left:138px;top:347px;width:1px;height:373px;background:#a0a0a0;"></div>
<div class="a" style="left:139px;top:381px;width:1px;height:100px;background:#f4f4f4;"></div>
</body></html>
